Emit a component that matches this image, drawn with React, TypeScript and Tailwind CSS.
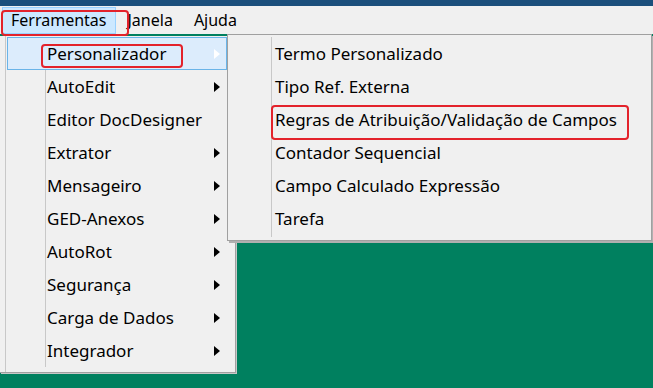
const mainItems = [
  { label: "Personalizador", sub: true },
  { label: "AutoEdit", sub: true },
  { label: "Editor DocDesigner", sub: false },
  { label: "Extrator", sub: true },
  { label: "Mensageiro", sub: true },
  { label: "GED-Anexos", sub: true },
  { label: "AutoRot", sub: true },
  { label: "Segurança", sub: true },
  { label: "Carga de Dados", sub: true },
  { label: "Integrador", sub: true },
];

const subItems = [
  "Termo Personalizado",
  "Tipo Ref. Externa",
  "Regras de Atribuição/Validação de Campos",
  "Contador Sequencial",
  "Campo Calculado Expressão",
  "Tarefa",
];

function Arrow({ white }: { white?: boolean }) {
  return (
    <svg width="6" height="10" viewBox="0 0 6 10">
      <path d="M0 0 L6 5 L0 10 Z" fill={white ? "#ffffff" : "#000000"} />
    </svg>
  );
}

function App() {
  return (
    <div
      className="relative w-[653px] h-[388px] overflow-hidden bg-[#00805f] text-[17px] text-black"
      style={{ fontFamily: '"Noto Sans", "Open Sans", sans-serif' }}
    >
      {/* title bar strip */}
      <div className="h-[6px] bg-[#1b4f7c]" />

      {/* menu bar */}
      <div className="h-[28px] bg-[#f0f0f0] flex items-center pl-[2px] text-[16px]">
        <div className="h-[27px] pl-[8px] pr-[8px] flex items-center bg-[#cce8ff] border border-[#99d1ff]">Ferramentas</div>
        <div className="pl-[12px] pr-[12px]">Janela</div>
        <div className="pl-[9px]">Ajuda</div>
      </div>

      {/* Ferramentas dropdown */}
      <div className="absolute left-0 top-[36px] w-[236px] h-[337px] bg-[#f0f0f0] border-r border-b border-[#a0a0a0] shadow-[1px_1px_0_#c8c8c8] pl-[5px]">
        <div className="h-full flex flex-col border-l border-[#c8c8c8] pt-[1px] pl-[1px]">
          {mainItems.map((it, i) => (
            <div
              key={it.label}
              className={
                i === 0
                  ? "h-[33px] flex bg-[#dcecfc] border border-[#6ab4e8] mr-[8px]"
                  : "h-[33px] flex"
              }
            >
              <div className={i === 0 ? "w-[37px]" : "w-[38px]"} />
              <div
                className={
                  i === 0
                    ? "flex-1 flex items-center justify-between border-l border-transparent pl-[1px] pr-[6px]"
                    : "flex-1 flex items-center justify-between border-l border-[#c8c8c8] pl-[1px] pr-[15px]"
                }
              >
                <span>{it.label}</span>
                {it.sub && <Arrow white={i === 0} />}
              </div>
            </div>
          ))}
        </div>
      </div>

      {/* Personalizador submenu */}
      <div className="absolute left-[227px] top-[34px] w-[425px] h-[207px] bg-[#f0f0f0] border border-[#a0a0a0] shadow-[2px_2px_0_#b0b0b0] pt-[2px] pb-[3px] pl-[3px] flex">
        <div className="w-[40px]" />
        <div className="flex flex-col border-l border-[#c8c8c8]">
          {subItems.map((s) => (
            <div key={s} className="h-[33px] flex items-center pl-[3px]">
              {s}
            </div>
          ))}
        </div>
      </div>

      {/* red annotation boxes */}
      <div className="absolute left-[1px] top-[10px] w-[128px] h-[26px] border-2 border-[#e3222b] rounded-[4px]" />
      <div className="absolute left-[41px] top-[44px] w-[142px] h-[24px] border-2 border-[#e3222b] rounded-[4px]" />
      <div className="absolute left-[271px] top-[105px] w-[358px] h-[35px] border-2 border-[#e3222b] rounded-[4px]" />
    </div>
  );
}

export default App;
